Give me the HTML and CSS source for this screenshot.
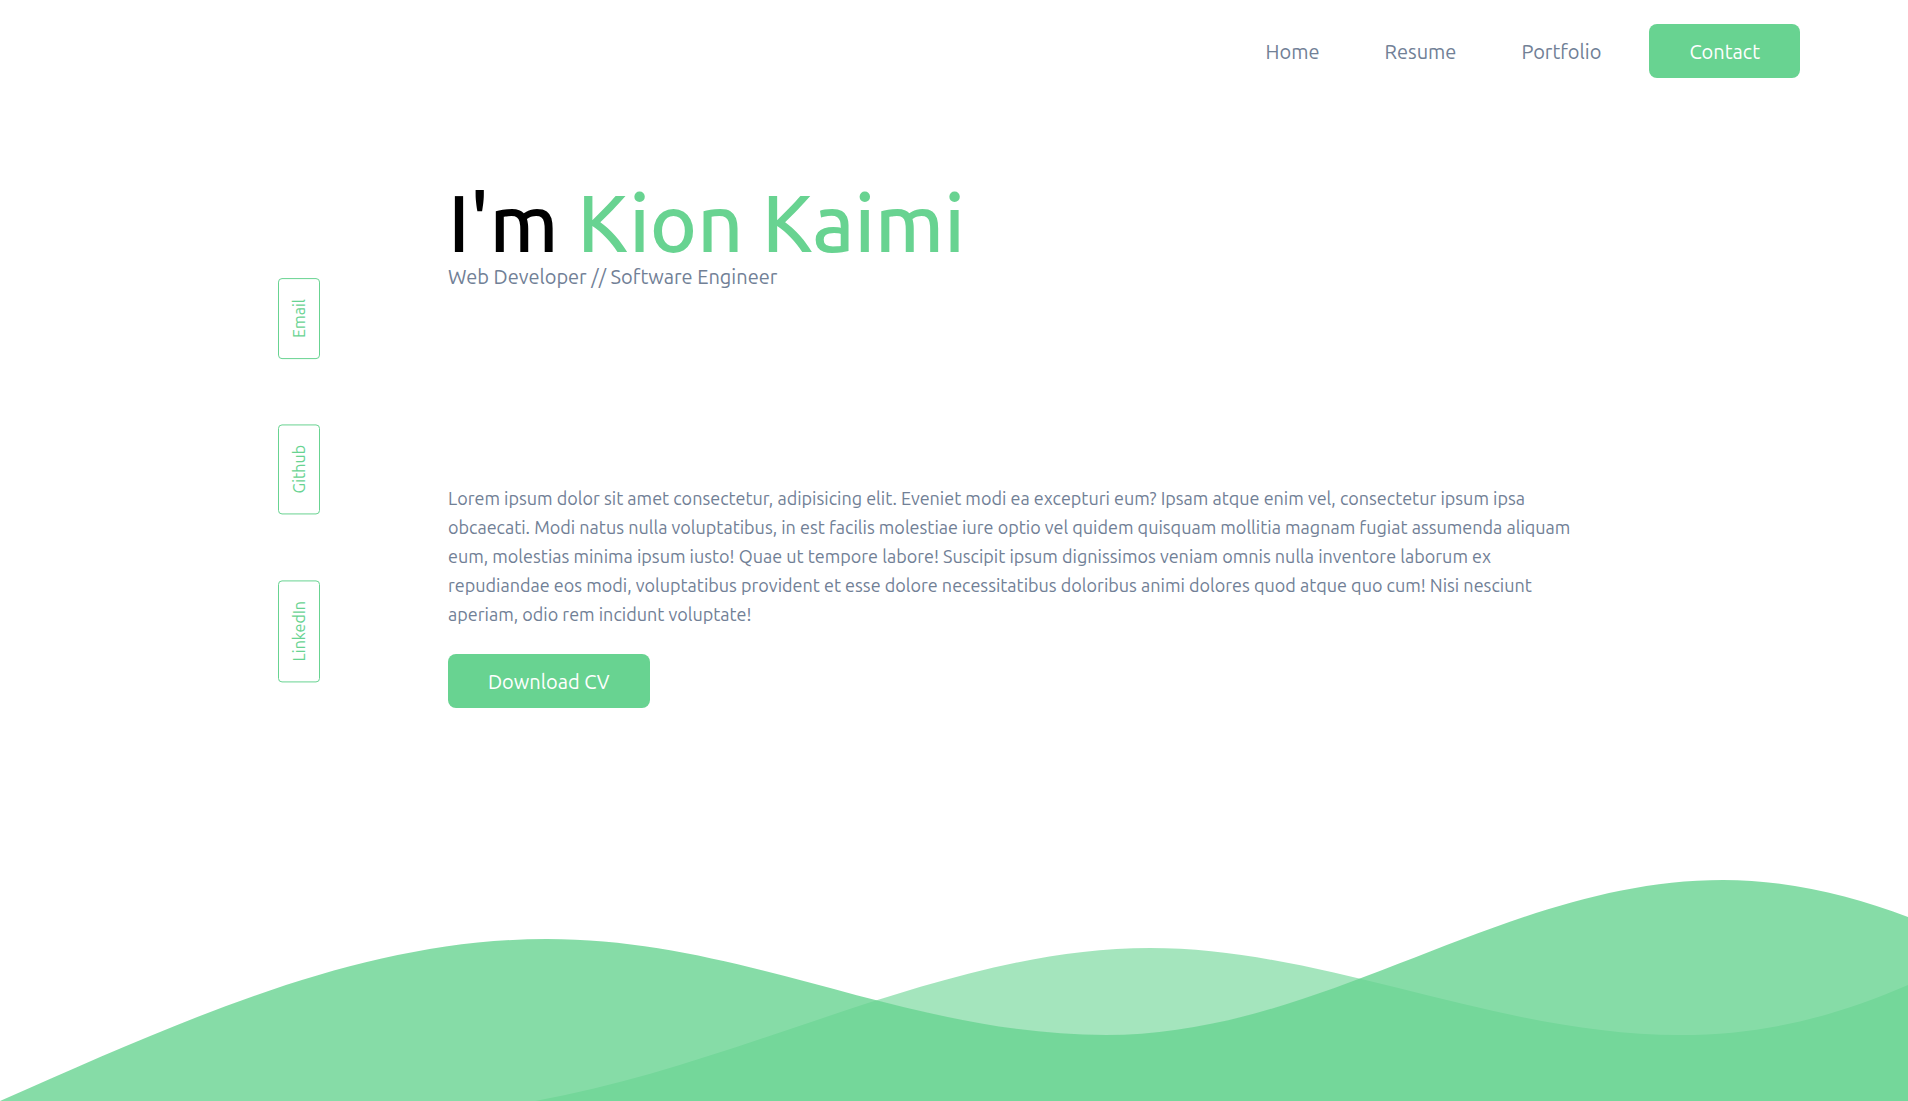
FILE: index.html
```
<!DOCTYPE html>
<html lang="en">
<head>
  <meta charset="utf-8">
  <meta name="viewport" content="width=device-width, initial-scale=1">
  <title>Kion Kaimi</title>
  <link rel="stylesheet" href="styles.css">
</head>
<body class="page">
  <header class="header">
    <nav class="nav">
      <a class="nav-link" href="#home">Home</a>
      <a class="nav-link" href="#resume">Resume</a>
      <a class="nav-link" href="#portfolio">Portfolio</a>
    </nav>
    <button class="btn" type="button">Contact</button>
  </header>

  <main class="main">
    <aside class="social">
      <a class="social-link" href="#email">Email</a>
      <a class="social-link" href="#github">Github</a>
      <a class="social-link" href="#linkedin">LinkedIn</a>
    </aside>
    <section class="intro">
      <h1 class="title">I'm <span class="name">Kion Kaimi</span></h1>
      <p class="role">Web Developer // Software Engineer</p>
      <p class="bio">Lorem ipsum dolor sit amet consectetur, adipisicing elit. Eveniet modi ea excepturi eum? Ipsam atque enim vel, consectetur ipsum ipsa obcaecati. Modi natus nulla voluptatibus, in est facilis molestiae iure optio vel quidem quisquam mollitia magnam fugiat assumenda aliquam eum, molestias minima ipsum iusto! Quae ut tempore labore! Suscipit ipsum dignissimos veniam omnis nulla inventore laborum ex repudiandae eos modi, voluptatibus provident et esse dolore necessitatibus doloribus animi dolores quod atque quo cum! Nisi nesciunt aperiam, odio rem incidunt voluptate!</p>
      <button class="btn" type="button">Download CV</button>
    </section>
  </main>

  <svg class="waves" viewBox="0 0 1908 221" aria-hidden="true">
    <path class="wave-back" d="M535 221C746 184 946 68 1150 68C1326 68 1496 155 1680 155C1770 155 1840 134 1908 105V221Z"/>
    <path class="wave-front" d="M0 221C192 136 364 59 547 59C746 59 906 155 1106 155C1326 155 1504 0 1723 0C1788 0 1850 15 1908 37V221Z"/>
  </svg>
</body>
</html>
```
FILE: styles.css
```
:root {
  --green: #68d391;
  --slate: #718096;
}

*,
*::before,
*::after {
  box-sizing: border-box;
}

.page {
  display: flex;
  flex-direction: column;
  min-height: 100vh;
  margin: 0;
  background: #fff;
  color: var(--slate);
  font-family: Ubuntu, "Noto Sans", sans-serif;
  font-size: 20px;
  line-height: 30px;
}

.header {
  display: flex;
  justify-content: flex-end;
  align-items: center;
  gap: 48px;
  padding: 24px 108px;
}

.nav {
  display: flex;
  gap: 65px;
  padding-top: 2px;
}

.nav-link {
  color: inherit;
  text-decoration: none;
}

.btn {
  padding: 13px 40px 11px;
  border: 0;
  border-radius: 8px;
  background: var(--green);
  color: #fff;
  font: inherit;
  cursor: pointer;
}

.main {
  display: flex;
  gap: 128px;
  width: 1352px;
  max-width: 100%;
  margin: 0 auto;
  padding-top: 56px;
}

.social {
  display: flex;
  flex-direction: column;
  align-items: center;
  gap: 65px;
  padding-top: 120px;
}

.social-link {
  padding: 20px 8px;
  border: 1px solid var(--green);
  border-radius: 4px;
  color: var(--green);
  font-size: 16px;
  line-height: 24px;
  text-decoration: none;
  writing-mode: vertical-rl;
  transform: rotate(180deg);
}

.intro {
  flex: 1;
  min-width: 0;
  padding-top: 24px;
}

.title {
  margin: 0;
  color: #000;
  font-size: 80px;
  font-weight: 500;
  line-height: 80px;
}

.name {
  color: var(--green);
}

.role {
  margin: 0;
}

.bio {
  max-width: 1144px;
  margin: 192px 0 25px;
  font-size: 18px;
  line-height: 29px;
}

.waves {
  display: block;
  width: 100%;
  margin-top: auto;
}

.wave-back {
  fill: var(--green);
  fill-opacity: 0.6;
}

.wave-front {
  fill: var(--green);
  fill-opacity: 0.8;
}
```
